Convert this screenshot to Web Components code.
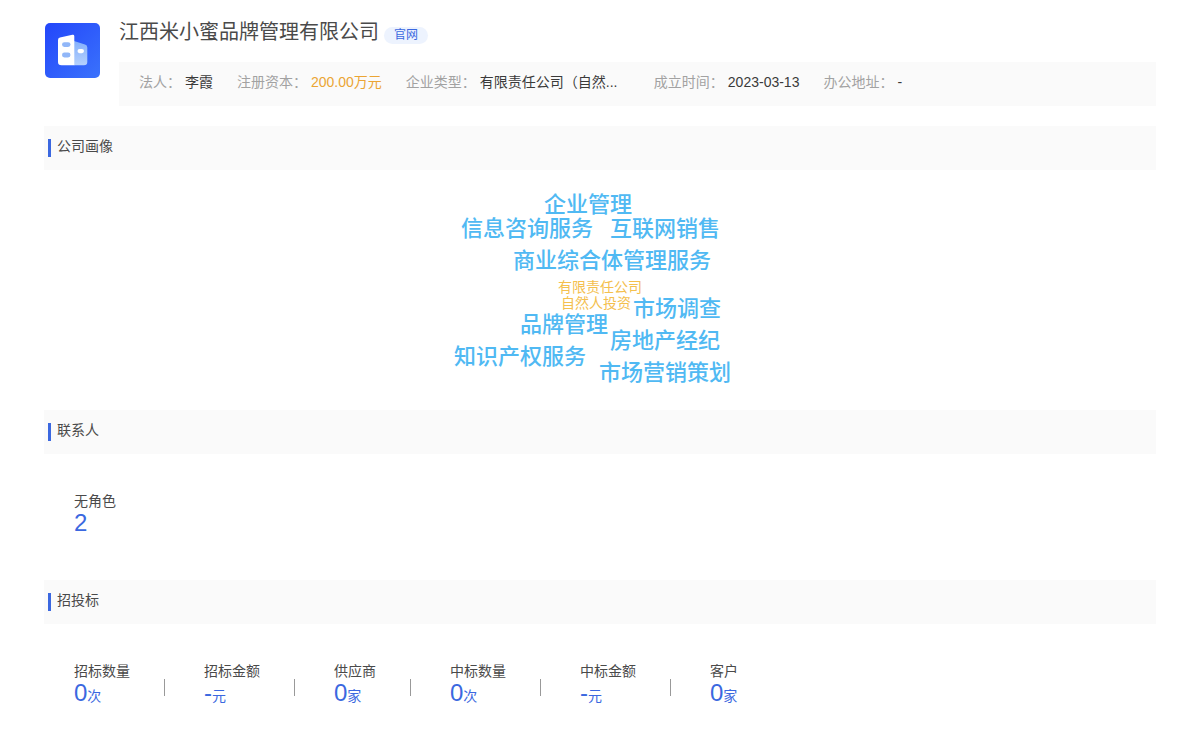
<!DOCTYPE html>
<html lang="zh-CN">
<head>
<meta charset="utf-8">
<meta name="viewport" content="width=device-width, initial-scale=1">
<title>江西米小蜜品牌管理有限公司</title>
<style>
  body {
    margin: 0;
    background: #fff;
    color: #444;
    font: 14px/20px "Liberation Sans", "Noto Sans CJK SC", sans-serif;
    --accent: #3b68e0;
    --panel: #fafafa;
    --text: #4a4a4a;
  }
</style>
</head>
<body>
<company-page></company-page>

<script>
const define = (name, html) => {
  const template = document.createElement('template');
  template.innerHTML = html;
  customElements.define(name, class extends HTMLElement {
    constructor() {
      super();
      this.attachShadow({ mode: 'open' }).append(template.content.cloneNode(true));
    }
  });
};

define('company-logo', `
  <style>
    :host { display: block; flex: none; width: 55px; height: 55px; }
    svg { display: block; width: 100%; height: 100%; }
  </style>
  <svg viewBox="0 0 55 55" role="img" aria-label="企业">
    <defs>
      <linearGradient id="bg" x1="0" y1="0" x2="1" y2="1">
        <stop offset="0" stop-color="#2346fa"/><stop offset="1" stop-color="#3a72fc"/>
      </linearGradient>
      <linearGradient id="side" x1="0" y1="0" x2="0" y2="1">
        <stop offset="0" stop-color="#84b0fb"/><stop offset="1" stop-color="#b4d0fd"/>
      </linearGradient>
    </defs>
    <rect width="55" height="55" rx="5" fill="url(#bg)"/>
    <path d="M29 18l11 3.4q2.300.7 2.300 3V39q0 3.300-3.300 3.300H29z" fill="url(#side)"/>
    <path d="M15 14.600L27.400 11.800Q29.300 11.400 29.300 13.200V42.300H16.500Q13 42.300 13 39V17q0-2 2-2.400z" fill="#fff"/>
    <rect x="17" y="19.200" width="8.500" height="4.800" rx="2.400" fill="#91b7f8"/>
    <rect x="17" y="29.600" width="8.500" height="4.800" rx="2.400" fill="#91b7f8"/>
    <rect x="32.500" y="26" width="6.500" height="4.200" rx="2.100" fill="#fff"/>
  </svg>`);

define('info-item', `
  <style>
    :host { display: flex; gap: 4px; white-space: nowrap; color: #3a3a3a; }
    .label { color: #a2a2a2; }
    :host([wide]) .value { width: 150px; }
    :host([highlight]) .value { color: #eba534; }
  </style>
  <span class="label"><slot name="label"></slot></span>
  <span class="value"><slot></slot></span>`);

define('company-header', `
  <style>
    :host { display: flex; align-items: center; gap: 19px; }
    .main { flex: 1; min-width: 0; }
    .title { display: flex; align-items: center; gap: 5px; padding-bottom: 16px; }
    h1 { margin: 0; font-size: 20px; line-height: 28px; font-weight: 400; color: var(--text); }
    a { margin-top: 7px; padding: 0 10px; border-radius: 9px; background: #edf3fe;
        color: var(--accent); font-size: 12px; line-height: 17px; text-decoration: none; }
    .info { display: flex; flex-wrap: wrap; column-gap: 24px; padding: 10px 20px 14px;
            background: var(--panel); }
    company-logo { align-self: flex-start; margin-top: 5px; }
  </style>
  <company-logo></company-logo>
  <div class="main">
    <div class="title"><h1>江西米小蜜品牌管理有限公司</h1><a href="#">官网</a></div>
    <div class="info">
      <info-item><span slot="label">法人：</span>李霞</info-item>
      <info-item highlight><span slot="label">注册资本：</span>200.00万元</info-item>
      <info-item wide><span slot="label">企业类型：</span>有限责任公司（自然...</info-item>
      <info-item><span slot="label">成立时间：</span>2023-03-13</info-item>
      <info-item><span slot="label">办公地址：</span>-</info-item>
    </div>
  </div>`);

define('page-section', `
  <style>
    :host { display: block; }
    header { display: flex; align-items: center; gap: 6px; height: 44px; padding-left: 4px;
             background: var(--panel); }
    header::before { content: ""; width: 3px; height: 18px; background: var(--accent); }
    h2 { margin: 0; padding-bottom: 4px; font-size: 14px; line-height: 20px; font-weight: 400; color: var(--text); }
  </style>
  <header><h2><slot name="title"></slot></h2></header>
  <slot></slot>`);

define('cloud-word', `
  <style>
    :host { position: absolute; left: var(--x); top: var(--y); white-space: nowrap;
            font-size: 22px; line-height: 24px; font-weight: 500; color: #50b9f3; }
    :host([small]) { font-size: 14px; line-height: 16px; font-weight: 400; color: #f4c04e; }
  </style>
  <slot></slot>`);

define('word-cloud', `
  <style>
    :host { display: block; position: relative; width: 300px; height: 240px; margin: 0 auto; }
  </style>
  <slot></slot>`);

define('stat-row', `
  <style>
    :host { display: flex; flex-wrap: wrap; padding: 37px 30px 45px; }
  </style>
  <slot></slot>`);

define('stat-item', `
  <style>
    :host { display: flex; align-items: center; }
    :host(:not(:last-child))::after { content: ""; width: 1px; height: 17px;
      margin: 6px 39px 0 34px; background: #999; }
    .label { color: var(--text); }
    .value { display: block; color: var(--accent); font-size: 24px; line-height: 24px; }
    ::slotted([slot=unit]) { font-size: 14px; }
  </style>
  <div>
    <span class="label"><slot name="label"></slot></span>
    <span class="value"><slot></slot><slot name="unit"></slot></span>
  </div>`);

define('company-page', `
  <style>
    :host { display: block; padding: 18px 44px 0; }
    company-header { margin-bottom: 20px; padding-left: 1px; }
  </style>
  <company-header></company-header>
  <page-section>
    <span slot="title">公司画像</span>
    <word-cloud>
      <cloud-word style="--x:94px;--y:23px">企业管理</cloud-word>
      <cloud-word style="--x:11px;--y:47px">信息咨询服务</cloud-word>
      <cloud-word style="--x:160px;--y:47px">互联网销售</cloud-word>
      <cloud-word style="--x:63px;--y:79px">商业综合体管理服务</cloud-word>
      <cloud-word small style="--x:108px;--y:109px">有限责任公司</cloud-word>
      <cloud-word small style="--x:111px;--y:125px">自然人投资</cloud-word>
      <cloud-word style="--x:183px;--y:127px">市场调查</cloud-word>
      <cloud-word style="--x:70px;--y:143px">品牌管理</cloud-word>
      <cloud-word style="--x:160px;--y:159px">房地产经纪</cloud-word>
      <cloud-word style="--x:4px;--y:175px">知识产权服务</cloud-word>
      <cloud-word style="--x:149px;--y:191px">市场营销策划</cloud-word>
    </word-cloud>
  </page-section>
  <page-section>
    <span slot="title">联系人</span>
    <stat-row>
      <stat-item><span slot="label">无角色</span>2</stat-item>
    </stat-row>
  </page-section>
  <page-section>
    <span slot="title">招投标</span>
    <stat-row>
      <stat-item><span slot="label">招标数量</span>0<span slot="unit">次</span></stat-item>
      <stat-item><span slot="label">招标金额</span>-<span slot="unit">元</span></stat-item>
      <stat-item><span slot="label">供应商</span>0<span slot="unit">家</span></stat-item>
      <stat-item><span slot="label">中标数量</span>0<span slot="unit">次</span></stat-item>
      <stat-item><span slot="label">中标金额</span>-<span slot="unit">元</span></stat-item>
      <stat-item><span slot="label">客户</span>0<span slot="unit">家</span></stat-item>
    </stat-row>
  </page-section>`);
</script>
</body>
</html>
